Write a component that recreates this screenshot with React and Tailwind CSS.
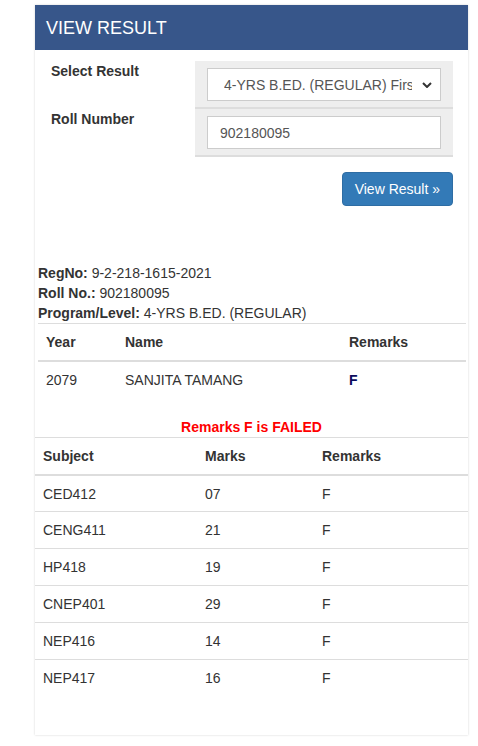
export default function App() {
  const subjects = [
    { code: "CED412", marks: "07", remarks: "F" },
    { code: "CENG411", marks: "21", remarks: "F" },
    { code: "HP418", marks: "19", remarks: "F" },
    { code: "CNEP401", marks: "29", remarks: "F" },
    { code: "NEP416", marks: "14", remarks: "F" },
    { code: "NEP417", marks: "16", remarks: "F" },
  ];

  return (
    <div className="min-h-[746px] bg-white pt-[5px] font-['Liberation_Sans',Arial,sans-serif] text-[14px] leading-[20px] text-[#333]">
      <div className="ml-[35px] w-[433px] bg-white pb-[39px] shadow-[0_0_2px_rgba(0,0,0,0.18)]">
        {/* Header */}
        <div className="flex h-[45px] items-center bg-[#37568a] pl-[11px] text-[18px] text-white">
          VIEW RESULT
        </div>

        {/* Form */}
        <div className="pt-[11px]">
          <div className="flex">
            <label className="w-[160px] pl-[16px] font-bold">Select Result</label>
            <div className="w-[258px] border-b-2 border-[#ddd] bg-[#eee] px-3 pt-[7px] pb-[6px]">
              <div className="relative">
                <select
                  defaultValue="a"
                  className="h-[33px] w-full appearance-none overflow-hidden whitespace-nowrap border border-[#ccc] bg-white pl-4 pr-[28px] text-[14px] text-[#555] outline-none"
                >
                  <option value="a">4-YRS B.ED. (REGULAR) First Year</option>
                </select>
                <svg
                  className="pointer-events-none absolute right-[9px] top-[14px]"
                  width="10"
                  height="6"
                  viewBox="0 0 10 6"
                  fill="none"
                >
                  <path d="M1 1l4 4 4-4" stroke="#333" strokeWidth="2" />
                </svg>
              </div>
            </div>
          </div>
          <div className="flex">
            <label className="w-[160px] pl-[16px] font-bold">Roll Number</label>
            <div className="w-[258px] border-b-2 border-[#ddd] bg-[#eee] px-3 pt-[7px] pb-[6px]">
              <input
                readOnly
                value="902180095"
                className="h-[33px] w-full border border-[#ccc] bg-white px-3 text-[14px] text-[#555] outline-none"
              />
            </div>
          </div>
          <div className="flex justify-end pr-[15px] pt-[15px]">
            <button className="h-[34px] rounded-[4px] border border-[#2e6da4] bg-[#337ab7] px-[12px] text-[14px] text-white">
              View Result »
            </button>
          </div>
        </div>

        {/* Student info */}
        <div className="mt-[57px] pl-[3px]">
          <div><span className="font-bold">RegNo:</span> 9-2-218-1615-2021</div>
          <div><span className="font-bold">Roll No.:</span> 902180095</div>
          <div><span className="font-bold">Program/Level:</span> 4-YRS B.ED. (REGULAR)</div>
        </div>

        <div className="ml-[3px] mr-[2px] border-t border-[#ddd]">
          <div className="grid h-[38px] grid-cols-[79px_224px_1fr] items-center border-b-2 border-[#ddd] font-bold">
            <div className="px-2">Year</div>
            <div className="px-2">Name</div>
            <div className="px-2">Remarks</div>
          </div>
          <div className="grid h-[35px] grid-cols-[79px_224px_1fr] items-center">
            <div className="px-2">2079</div>
            <div className="px-2">SANJITA TAMANG</div>
            <div className="px-2 font-bold text-[#0b0b5c]">F</div>
          </div>
        </div>

        <div className="mt-[20px] text-center font-bold text-[#ff0000]">Remarks F is FAILED</div>

        {/* Marks table */}
        <div className="border-t border-[#ddd]">
          <div className="grid h-[38px] grid-cols-[162px_117px_1fr] items-center border-b-2 border-[#ddd] font-bold">
            <div className="px-2">Subject</div>
            <div className="px-2">Marks</div>
            <div className="px-2">Remarks</div>
          </div>
          {subjects.map((s, i) => (
            <div
              key={s.code}
              className={`grid grid-cols-[162px_117px_1fr] items-center ${i === 0 ? "h-[35px]" : "h-[37px] border-t border-[#ddd]"}`}
            >
              <div className="px-2">{s.code}</div>
              <div className="px-2">{s.marks}</div>
              <div className="px-2">{s.remarks}</div>
            </div>
          ))}
        </div>
      </div>
    </div>
  );
}
